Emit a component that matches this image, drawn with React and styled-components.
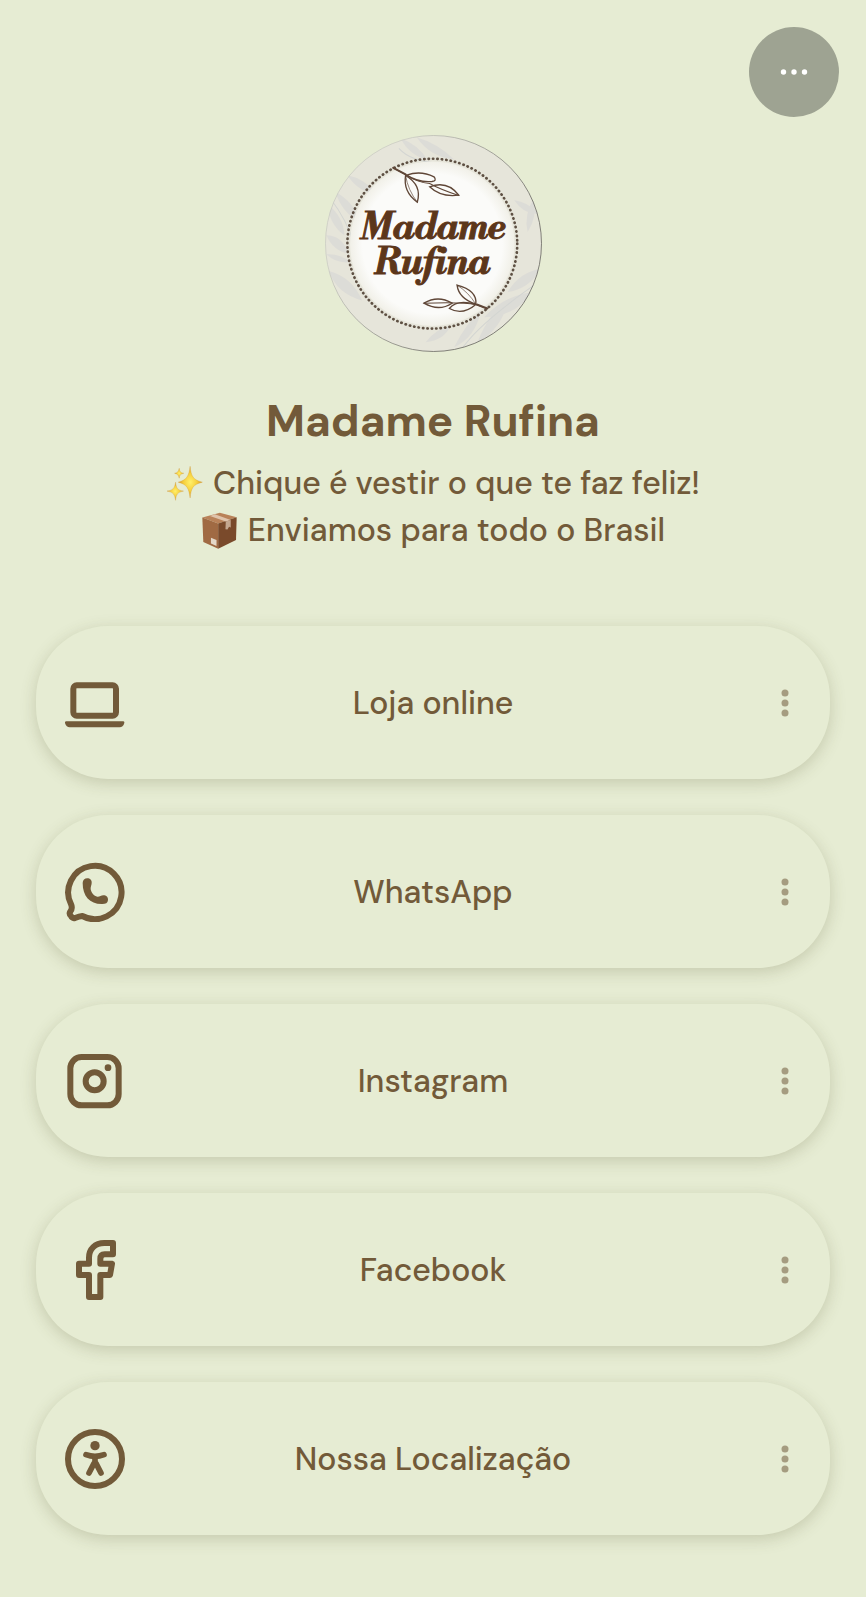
import React from "react";
import styled, {createGlobalStyle} from "styled-components";

const brown = "#725a39";
const cream = "#e6ecd3";

const LaptopIcon = () => (
    <svg viewBox="135 188 180 180" fill="none" stroke="currentColor" aria-hidden="true">
        <rect x="160" y="225" width="128" height="91" rx="10" strokeWidth="18"/>
        <path d="M139 333H309Q314 333 313 338Q309 351 299 351H149Q139 351 135 338Q134 333 139 333Z" fill="currentColor" stroke="none"/>
    </svg>
);

const WhatsAppIcon = () => (
    <svg viewBox="75 65 180 180" fill="none" stroke="currentColor" strokeLinejoin="round" aria-hidden="true">
        <path
            d="M94 194A80 80 0 1 1 127 227Q118 228 105 233Q97 235 93 227Q87 222 90 215Q98 206 94 194Z"
            strokeWidth="18"
        />
        <path
            d="M128 128C128 119 134 114 142 114C150 114 156 120 155 128C155 134 151 140 152 147C154 158 162 167 172 169C178 170 183 165 190 165C199 165 205 171 204 179C203 188 197 191 187 191C150 192 128 168 128 128Z"
            fill="currentColor" stroke="none"
        />
    </svg>
);

const InstagramIcon = () => (
    <svg viewBox="75 60 180 180" fill="none" stroke="currentColor" aria-hidden="true">
        <rect x="91" y="78" width="145" height="145" rx="34" strokeWidth="18"/>
        <circle cx="164" cy="151" r="27" strokeWidth="18"/>
        <circle cx="204" cy="110" r="10" fill="currentColor" stroke="none"/>
    </svg>
);

const FacebookIcon = () => (
    <svg viewBox="75 57 180 180" fill="none" stroke="currentColor" strokeLinejoin="round" aria-hidden="true">
        <path
            d="M219 66H193C165 66 147 84 147 110V128H117V162H147V228H181V162H210L216 128H181V114C181 104 186 100 194 100H219Z"
            strokeWidth="18"
        />
    </svg>
);

const AccessibilityIcon = () => (
    <svg viewBox="75 67 180 180" fill="none" stroke="currentColor" strokeLinecap="round" strokeLinejoin="round" aria-hidden="true">
        <circle cx="165" cy="157" r="81" strokeWidth="18"/>
        <circle cx="165" cy="117" r="14" fill="currentColor" stroke="none"/>
        <path d="M138 144Q165 154 192 144" strokeWidth="17"/>
        <path d="M165 152V170M162 170L147 199M168 170L183 199" strokeWidth="17"/>
    </svg>
);

const Sparkles = () => (
    <svg viewBox="40 224 112 112" role="img" aria-label="✨">
        <defs>
            <radialGradient id="spark">
                <stop offset="0" stopColor="#fff06a"/>
                <stop offset="0.55" stopColor="#f6cf3c"/>
                <stop offset="1" stopColor="#d9952a"/>
            </radialGradient>
        </defs>
        <g fill="url(#spark)" stroke="#d0a03c" strokeWidth="1">
            <path d="M113 228C116 258 122 269 150 276C122 283 116 293 113 324C109 293 103 283 77 276C103 269 109 258 113 228Z"/>
            <path d="M69 276C71 294 75 300 93 303C75 307 71 312 69 331C66 312 62 307 43 303C62 300 66 294 69 276Z"/>
            <path d="M80 234C81 244 84 248 94 249C84 251 81 255 80 264C78 255 75 251 66 249C75 248 78 244 80 234Z"/>
        </g>
    </svg>
);

const Package = () => (
    <svg viewBox="154 364 112 112" role="img" aria-label="📦">
        <path d="M158 381L211 366L262 380L206 399Z" fill="#b98259"/>
        <path d="M158 381L206 399V475L161 455Z" fill="#a06a43"/>
        <path d="M206 399L262 380L260 449L206 475Z" fill="#7a4a2b"/>
        <path d="M181 376L196 371L244 388L229 393Z" fill="#dfc3ab"/>
        <path d="M229 393L244 388V411L239 409L234 417L228 416Z" fill="#c4a78f"/>
        <path d="M184 442L201 449V467L184 459Z" fill="#e4d8c8"/>
    </svg>
);

const Logo = () => (
    <svg viewBox="44 45 649 649" role="img" aria-label="Madame Rufina">
        <defs>
            <clipPath id="disc"><circle cx="368.5" cy="369.5" r="324"/></clipPath>
            <radialGradient id="paper">
                <stop offset="0.85" stopColor="#fbfbf9"/>
                <stop offset="1" stopColor="#f1f0e8"/>
            </radialGradient>
            <linearGradient id="edge" x1="0" y1="0.2" x2="1" y2="0.8">
                <stop offset="0.2" stopColor="#c5c7bd"/>
                <stop offset="0.75" stopColor="#4c4b45"/>
            </linearGradient>
        </defs>
        <g clipPath="url(#disc)">
            <rect x="44" y="45" width="649" height="649" fill="#e6e5da"/>
            <g fill="#d8d9d6" opacity="0.7">
                <path d="M270 55Q325 75 350 120Q295 105 270 55Z"/>
                <path d="M318 52Q380 70 430 118Q360 112 318 52Z"/>
                <path d="M110 165Q160 175 205 225Q145 218 110 165Z"/>
                <path d="M75 215Q130 245 150 305Q95 280 75 215Z"/>
                <path d="M50 250Q100 290 102 345Q58 315 50 250Z"/>
                <path d="M48 345Q95 345 115 400Q68 392 48 345Z"/>
                <path d="M48 402Q85 398 122 425Q80 432 48 402Z"/>
                <path d="M55 452Q125 470 155 540Q80 520 55 452Z"/>
                <path d="M668 235Q680 290 650 335Q638 285 668 235Z"/>
                <path d="M610 240Q650 245 685 280Q640 285 610 240Z"/>
                <path d="M690 445Q625 455 590 515Q655 505 690 445Z"/>
                <path d="M665 515Q580 525 520 590Q610 590 665 515Z"/>
                <path d="M595 535Q535 575 500 665Q570 630 595 535Z"/>
                <path d="M510 570Q465 610 430 680Q495 650 510 570Z"/>
                <path d="M420 615Q375 625 345 665Q400 660 420 615Z"/>
            </g>
            <g fill="none" stroke="#d3d5d2" strokeWidth="3">
                <path d="M265 85Q300 125 390 130M60 235Q110 300 130 370M450 690Q500 610 690 480"/>
            </g>
        </g>
        <circle cx="365" cy="370" r="246" fill="url(#paper)"/>
        <circle
            cx="365" cy="370" r="254" fill="none" stroke="#5e5043" strokeWidth="8"
            strokeLinecap="round" strokeDasharray="1 12.3"
        />
        <g fill="none" stroke="#5f4637" strokeWidth="4" strokeLinecap="round">
            <path d="M248 143L288 165Q320 187 357 190Q385 206 444 226" strokeWidth="3"/>
            <path d="M248 143L285 163" strokeWidth="6"/>
            <path d="M288 165Q330 150 370 170Q380 182 364 184Q325 188 288 165Z"/>
            <path d="M285 166Q277 215 320 246Q335 195 285 166Z"/>
            <path d="M285 166Q292 210 320 246" strokeWidth="2"/>
            <path d="M357 200Q410 180 444 225Q390 232 357 200Z"/>
            <path d="M529 564L495 552Q455 544 340 548" strokeWidth="3"/>
            <path d="M529 564L498 552" strokeWidth="6"/>
            <path d="M340 548Q382 523 424 548Q385 574 340 548Z"/>
            <path d="M495 552Q440 535 416 564Q455 586 495 552Z"/>
            <path d="M495 551Q500 510 439 494Q444 534 495 551Z"/>
            <path d="M495 551Q474 516 439 494" strokeWidth="2"/>
        </g>
        <LogoText>
            <tspan x="366" y="355">Madame</tspan>
            <tspan x="364" y="460">Rufina</tspan>
        </LogoText>
        <circle cx="368.5" cy="369.5" r="323" fill="none" stroke="url(#edge)" strokeWidth="2"/>
    </svg>
);

const links = [
    {label: "Loja online", Icon: LaptopIcon},
    {label: "WhatsApp", Icon: WhatsAppIcon},
    {label: "Instagram", Icon: InstagramIcon},
    {label: "Facebook", Icon: FacebookIcon},
    {label: "Nossa Localização", Icon: AccessibilityIcon},
];

const App = () => {
    return (
        <>
            <GlobalStyle/>
            <Page>
                <TopBar>
                    <ShareButton type="button" aria-label="Mais opções">
                        <svg viewBox="0 0 30 8" width="30" height="8" fill="currentColor" aria-hidden="true">
                            <circle cx="4.5" cy="4" r="2.7"/>
                            <circle cx="15" cy="4" r="2.7"/>
                            <circle cx="25.5" cy="4" r="2.7"/>
                        </svg>
                    </ShareButton>
                </TopBar>
                <Profile>
                    <Avatar><Logo/></Avatar>
                    <Name>Madame Rufina</Name>
                    <Bio>
                        <BioLine><Emoji><Sparkles/></Emoji>Chique é vestir o que te faz feliz!</BioLine>
                        <BioLine><Emoji><Package/></Emoji>Enviamos para todo o Brasil</BioLine>
                    </Bio>
                </Profile>
                <LinkList>
                    {links.map(({label, Icon}) => (
                        <Card key={label}>
                            <CardLink href="#">
                                <Icon/>
                                <CardLabel>{label}</CardLabel>
                            </CardLink>
                            <MoreButton type="button" aria-label={`Opções de ${label}`}>
                                <svg viewBox="0 0 8 28" width="8" height="28" fill="currentColor" aria-hidden="true">
                                    <circle cx="4" cy="4" r="3.5"/>
                                    <circle cx="4" cy="14" r="3.5"/>
                                    <circle cx="4" cy="24" r="3.5"/>
                                </svg>
                            </MoreButton>
                        </Card>
                    ))}
                </LinkList>
            </Page>
        </>
    )
};

const GlobalStyle = createGlobalStyle`
    * {
        box-sizing: border-box;
    }
    body {
        margin: 0;
        background: ${cream};
        color: ${brown};
        font-family: "DM Sans", Inter, "Liberation Sans", sans-serif;
        font-variant-ligatures: none;
    }
    svg {
        display: block;
    }
`;

const Page = styled.main`
    min-height: 100vh;
    padding: 27px 36px 62px;
`;

const TopBar = styled.div`
    display: flex;
    justify-content: flex-end;
    margin-right: -9px;
`;

const ShareButton = styled.button`
    display: flex;
    align-items: center;
    justify-content: center;
    width: 90px;
    height: 90px;
    padding: 0;
    border: none;
    border-radius: 50%;
    background: #9ea392;
    color: #fff;
    cursor: pointer;
`;

const Profile = styled.header`
    display: flex;
    flex-direction: column;
    align-items: center;
    margin-top: 18px;
    text-align: center;
`;

const Avatar = styled.div`
    width: 217px;
    height: 217px;
`;

const LogoText = styled.text`
    fill: #5c361a;
    stroke: #5c361a;
    stroke-width: 3px;
    font-family: "Libre Bodoni", "Bodoni Moda", "Playfair Display", "Liberation Serif", serif;
    font-size: 110px;
    font-style: italic;
    font-weight: 700;
    text-anchor: middle;
`;

const Name = styled.h1`
    margin: 41px 0 11px;
    font-size: 44px;
    font-weight: 700;
    line-height: 56px;
`;

const Bio = styled.div`
    font-size: 32px;
    font-weight: 500;
    line-height: 47px;
`;

const BioLine = styled.p`
    display: flex;
    align-items: center;
    justify-content: center;
    margin: 0;
`;

const Emoji = styled.span`
    flex: none;
    width: 37px;
    height: 37px;
    margin-right: 10px;
`;

const LinkList = styled.ul`
    display: flex;
    flex-direction: column;
    gap: 36px;
    margin: 72px 0 0;
    padding: 0;
    list-style: none;
`;

const Card = styled.li`
    display: flex;
    align-items: stretch;
    height: 153px;
    padding: 0 29px;
    border-radius: 72px;
    background: ${cream};
    box-shadow: 0 4px 16px rgba(80, 80, 40, 0.22);
`;

const CardLink = styled.a`
    flex: 1;
    display: grid;
    grid-template-columns: 60px 1fr;
    align-items: center;
    padding-right: 28px;
    color: inherit;
    text-decoration: none;
`;

const CardLabel = styled.span`
    font-size: 32px;
    font-weight: 500;
    line-height: 40px;
    text-align: center;
`;

const MoreButton = styled.button`
    display: flex;
    align-items: center;
    justify-content: center;
    width: 32px;
    padding: 0;
    border: none;
    background: none;
    color: #a59c80;
    cursor: pointer;
`;

export default App
